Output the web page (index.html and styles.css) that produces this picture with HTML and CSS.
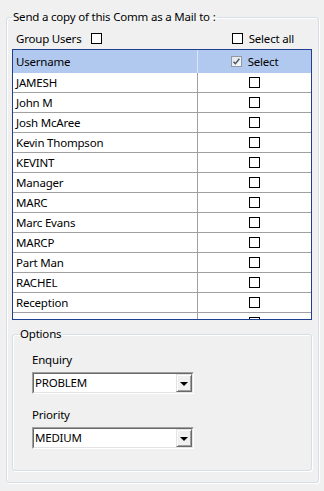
FILE: index.html
```html
<!DOCTYPE html>
<html lang="en">
<head>
    <meta charset="UTF-8">
    <meta name="viewport" content="width=device-width, initial-scale=1.0">
    <title>Send Mail</title>
    <link rel="stylesheet" href="styles.css">
</head>
<body>
    <fieldset class="mail-box">
      <legend>Send a copy of this Comm as a Mail to :</legend>

      <div class="toolbar">
        <label class="opt opt-group">Group Users <span class="box"></span></label>
        <label class="opt opt-all"><span class="box"></span> Select all</label>
      </div>

      <div class="grid">
        <div class="grid-head">
          <div class="cell cell-name">Username</div>
          <div class="cell cell-sel">
            <svg class="hdr-check" width="11" height="11" viewBox="0 0 11 11">
              <defs>
                <linearGradient id="hc" x1="0" y1="0" x2="1" y2="1">
                  <stop offset="0" stop-color="#dfe2e6"/>
                  <stop offset="1" stop-color="#fbfbfb"/>
                </linearGradient>
              </defs>
              <rect x="0.5" y="0.5" width="10" height="10" fill="url(#hc)" stroke="#8e9aa8"/>
              <path d="M2.5 5.8 L4.4 7.8 L8.4 2.8" fill="none" stroke="#445566" stroke-width="1.4"/>
            </svg>
            Select
          </div>
        </div>
        <div class="grid-row"><div class="cell cell-name">JAMESH</div><div class="cell cell-sel"><span class="box"></span></div></div>
        <div class="grid-row"><div class="cell cell-name">John M</div><div class="cell cell-sel"><span class="box"></span></div></div>
        <div class="grid-row"><div class="cell cell-name">Josh McAree</div><div class="cell cell-sel"><span class="box"></span></div></div>
        <div class="grid-row"><div class="cell cell-name">Kevin Thompson</div><div class="cell cell-sel"><span class="box"></span></div></div>
        <div class="grid-row"><div class="cell cell-name">KEVINT</div><div class="cell cell-sel"><span class="box"></span></div></div>
        <div class="grid-row"><div class="cell cell-name">Manager</div><div class="cell cell-sel"><span class="box"></span></div></div>
        <div class="grid-row"><div class="cell cell-name">MARC</div><div class="cell cell-sel"><span class="box"></span></div></div>
        <div class="grid-row"><div class="cell cell-name">Marc Evans</div><div class="cell cell-sel"><span class="box"></span></div></div>
        <div class="grid-row"><div class="cell cell-name">MARCP</div><div class="cell cell-sel"><span class="box"></span></div></div>
        <div class="grid-row"><div class="cell cell-name">Part Man</div><div class="cell cell-sel"><span class="box"></span></div></div>
        <div class="grid-row"><div class="cell cell-name">RACHEL</div><div class="cell cell-sel"><span class="box"></span></div></div>
        <div class="grid-row"><div class="cell cell-name">Reception</div><div class="cell cell-sel"><span class="box"></span></div></div>
        <div class="grid-row"><div class="cell cell-name">Ron Ellis</div><div class="cell cell-sel"><span class="box"></span></div></div>
      </div>

      <fieldset class="options">
        <legend>Options</legend>

        <div class="field">
          <div class="field-label">Enquiry</div>
          <div class="combo">
            <div class="combo-in">
              <span class="combo-text">PROBLEM</span>
              <span class="combo-btn"><span class="arrow"></span></span>
            </div>
          </div>
        </div>

        <div class="field">
          <div class="field-label">Priority</div>
          <div class="combo">
            <div class="combo-in">
              <span class="combo-text">MEDIUM</span>
              <span class="combo-btn"><span class="arrow"></span></span>
            </div>
          </div>
        </div>
      </fieldset>
    </fieldset>
</body>
</html>
```

FILE: styles.css
```css
    * {
        box-sizing: border-box;
    }

    body {
        margin: 0;
        width: 324px;
        height: 491px;
        overflow: hidden;
        background-color: #f0f0f0;
        font-family: "Noto Sans", sans-serif;
        font-size: 11.5px;
        letter-spacing: -0.2px;
        color: #000;
    }

    fieldset {
        min-width: 0;
        margin: 0;
        border: 1px solid #d5dfe5;
        border-radius: 3px;
        box-shadow: inset 1px 1px 0 #fff, 1px 1px 0 #fff;
    }

    legend {
        padding: 0 1px;
        line-height: 16px;
    }

    .mail-box {
        margin: 9px 0 0 6px;
        width: 313px;
        height: 474px;
        padding: 3px 6px 0 5px;
    }

    .toolbar {
        display: flex;
        align-items: center;
        height: 21px;
    }

    .opt {
        display: flex;
        align-items: center;
        white-space: pre;
    }

    .opt-group {
        padding-left: 4px;
    }

    .opt-group .box {
        margin-left: 7px;
    }

    .opt-all {
        margin-left: auto;
        margin-right: 18px;
    }

    .opt-all .box {
        margin-right: 3px;
    }

    .box {
        display: inline-block;
        width: 11px;
        height: 11px;
        border: 1px solid #000;
        background-color: #fff;
    }

    /* user list */
    .grid {
        width: 300px;
        height: 271px;
        overflow: hidden;
        border: 1px solid #1f3f8f;
        background-color: #fff;
    }

    .grid-head,
    .grid-row {
        display: grid;
        grid-template-columns: 185px 1fr;
    }

    .grid-head {
        height: 23px;
        background-color: #b1c9ee;
    }

    .grid-row {
        height: 20px;
        border-bottom: 1px solid #a0a0a0;
    }

    .cell {
        display: flex;
        align-items: center;
        white-space: nowrap;
    }

    .cell-name {
        padding-left: 3px;
        border-right: 1px solid #a0a0a0;
    }

    .grid-head .cell-name {
        border-right-color: #dde6f4;
    }

    .cell-sel {
        justify-content: center;
    }

    .hdr-check {
        margin-right: 6px;
    }

    /* options box */
    .options {
        margin-top: 6px;
        width: 300px;
        height: 145px;
        padding: 10px 0 0 7px;
    }

    .options legend {
        padding: 0;
    }

    .field {
        margin-left: 12px;
        margin-bottom: 13px;
    }

    .field-label {
        line-height: 16px;
        margin-bottom: 4px;
    }

    .combo {
        width: 162px;
        height: 22px;
        border: 1px solid;
        border-color: #a0a0a0 #fff #fff #a0a0a0;
    }

    .combo-in {
        display: flex;
        height: 100%;
        border: 1px solid;
        border-color: #696969 #e3e3e3 #e3e3e3 #696969;
        background-color: #fff;
    }

    .combo-text {
        flex: 1;
        padding-left: 1px;
        line-height: 18px;
    }

    .combo-btn {
        display: flex;
        align-items: center;
        justify-content: center;
        width: 16px;
        height: 18px;
        border: 1px solid;
        border-color: #e3e3e3 #696969 #696969 #e3e3e3;
        box-shadow: inset 1px 1px 0 #fff, inset -1px -1px 0 #a0a0a0;
        background-color: #f0f0f0;
    }

    .arrow {
        width: 0;
        height: 0;
        margin-top: 1px;
        border-left: 4px solid transparent;
        border-right: 4px solid transparent;
        border-top: 4px solid #000;
    }
```
